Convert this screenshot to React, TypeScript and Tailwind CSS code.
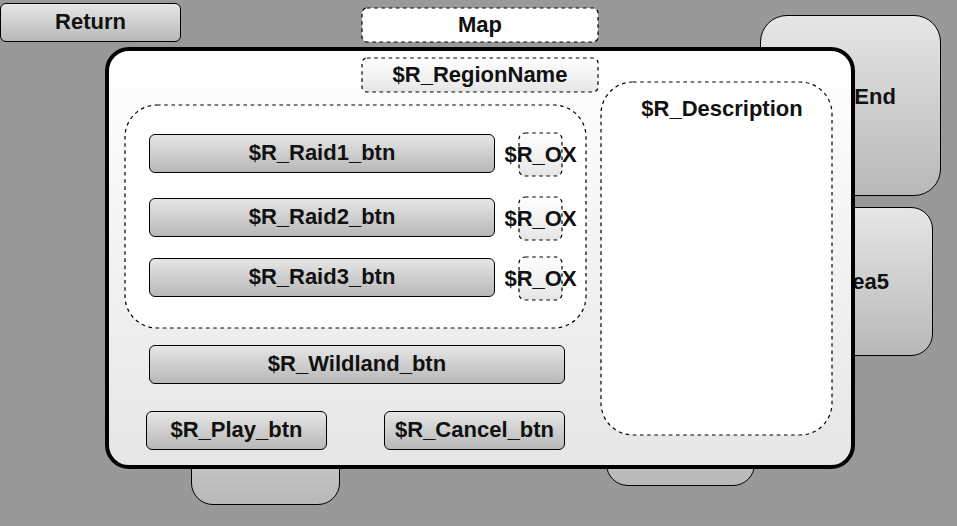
import type { ReactNode } from "react";
import { clsx } from "clsx";

const metal = "border border-black bg-linear-to-b from-[#e6e6e6] to-[#b8b8b8]";

function MetalButton({ children, className }: { children: ReactNode; className?: string }) {
  return (
    <button
      type="button"
      className={clsx("h-[39px] rounded-md pb-0.5 text-center whitespace-nowrap leading-6", metal, className)}
    >
      {children}
    </button>
  );
}

/* A box whose outline is an evenly dashed line that follows the rounded corners. */
function DashedBox({
  children,
  className,
  radius,
}: {
  children?: ReactNode;
  className?: string;
  radius: number;
}) {
  return (
    <div className={clsx("relative", className)}>
      <svg className="pointer-events-none absolute inset-0 size-full overflow-visible" aria-hidden="true">
        <rect
          width="100%"
          height="100%"
          rx={radius}
          fill="none"
          stroke="#000"
          strokeWidth="1.2"
          strokeDasharray="3.6 3.6"
        />
      </svg>
      {children}
    </div>
  );
}

function RaidRow({ label, className }: { label: string; className?: string }) {
  return (
    <li className={clsx("flex items-start gap-6", className)}>
      <MetalButton className="mt-px min-w-0 flex-1">{label}</MetalButton>
      <DashedBox
        radius={6}
        className="flex h-[43px] w-[43px] items-center justify-center rounded-md bg-linear-to-b from-white to-[#e6e6e6]"
      >
        <span className="shrink-0 leading-6">$R_OX</span>
      </DashedBox>
    </li>
  );
}

function MapArea({ label, name, className }: { label?: string; name: string; className: string }) {
  return (
    <button type="button" aria-label={name} className={clsx("absolute whitespace-nowrap", metal, className)}>
      {label}
    </button>
  );
}

export default function App() {
  return (
    <main className="relative min-h-screen overflow-hidden bg-[#999999] font-['Liberation_Sans',Arial,sans-serif] text-[22px] leading-6 font-bold text-[#111111]">
      <MapArea name="The End" label="The End" className="top-[15px] right-4 size-[181px] rounded-[27px] pb-[18px] pl-1" />
      <MapArea name="Area5" label="Area5" className="top-[207px] right-6 size-[149px] rounded-[22px]" />
      <MapArea name="Area1" className="top-[356px] left-[191px] size-[149px] rounded-[22px]" />
      <MapArea name="Area2" className="top-[337px] left-[606px] size-[149px] rounded-[22px]" />

      <header className="relative grid h-[47px] grid-cols-[181px_1fr_178px] items-start pt-[3px]">
        <MetalButton>Return</MetalButton>
        <DashedBox
          radius={5}
          className="mt-[5px] flex h-[34px] w-[236px] items-center justify-center justify-self-center rounded-md bg-white"
        >
          <h1>Map</h1>
        </DashedBox>
      </header>

      <section
        role="dialog"
        aria-label="$R_RegionName"
        className="relative mr-[102px] ml-[105px] flex gap-[3px] rounded-[24px] border-4 border-black bg-linear-to-b from-white to-[#e6e6e6] pt-[7px] pr-[19px] pb-[15px] pl-4"
      >
        <div className="flex min-w-0 flex-1 flex-col">
          <DashedBox
            radius={5}
            className="flex h-[34px] w-[236px] items-center justify-center self-end rounded-md bg-linear-to-b from-white to-[#e6e6e6]"
          >
            <h2>$R_RegionName</h2>
          </DashedBox>

          <DashedBox radius={32} className="mt-[13px] mr-3 rounded-[32px] bg-white pt-7 pr-6 pb-7 pl-6">
            <ul>
              <RaidRow label="$R_Raid1_btn" className="mb-[21px]" />
              <RaidRow label="$R_Raid2_btn" className="mb-[17px]" />
              <RaidRow label="$R_Raid3_btn" />
            </ul>
          </DashedBox>

          <MetalButton className="mt-[17px] mr-[33px] ml-6">$R_Wildland_btn</MetalButton>

          <div className="mt-[27px] mr-[33px] ml-[21px] flex justify-between">
            <MetalButton className="w-[181px]">$R_Play_btn</MetalButton>
            <MetalButton className="w-[181px]">$R_Cancel_btn</MetalButton>
          </div>
        </div>

        <DashedBox
          radius={32}
          className="mt-6 mb-[15px] w-[231px] rounded-[32px] bg-white pt-[15px] pl-[11px] text-center"
        >
          <p>$R_Description</p>
        </DashedBox>
      </section>
    </main>
  );
}
